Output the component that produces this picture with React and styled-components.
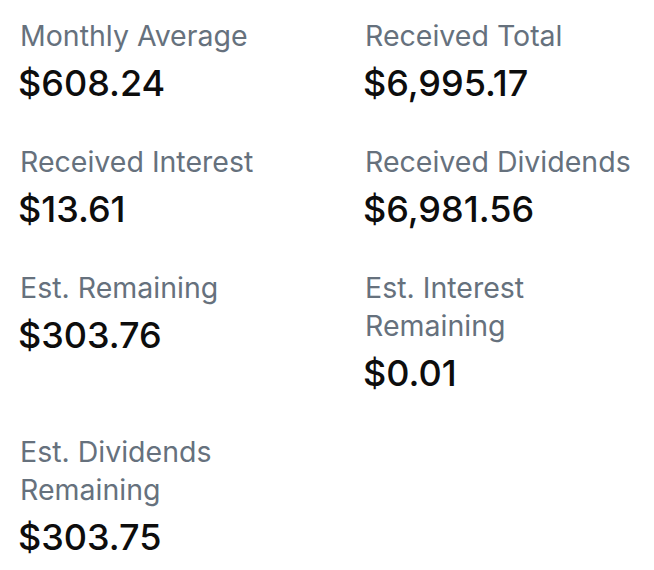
import React from "react";
import styled, { createGlobalStyle } from "styled-components";

const Global = createGlobalStyle`
  html, body { margin: 0; padding: 0; background: #ffffff; }
`;

const Grid = styled.div`
  display: grid;
  grid-template-columns: 269px 285px;
  column-gap: 76px;
  row-gap: 38px;
  padding: 17px 0 20px 20px;
  align-items: start;
`;

const Stat = styled.div`
  display: flex;
  flex-direction: column;
  gap: 6px;
`;

const Label = styled.div`
  font-family: Inter, "Liberation Sans", sans-serif;
  font-size: 28.5px;
  line-height: 38px;
  color: #66717d;
`;

const Value = styled.div`
  font-family: Inter, "Liberation Sans", sans-serif;
  font-size: 36px;
  line-height: 44px;
  font-weight: 500;
  color: #0d0d0d;
  margin-left: -2px;
`;

const stats = [
  ["Monthly Average", "$608.24"],
  ["Received Total", "$6,995.17"],
  ["Received Interest", "$13.61"],
  ["Received Dividends", "$6,981.56"],
  ["Est. Remaining", "$303.76"],
  ["Est. Interest Remaining", "$0.01"],
  ["Est. Dividends Remaining", "$303.75"],
];

export default function App() {
  return (
    <>
      <Global />
      <Grid>
        {stats.map(([label, value]) => (
          <Stat key={label}>
            <Label>{label}</Label>
            <Value>{value}</Value>
          </Stat>
        ))}
      </Grid>
    </>
  );
}
